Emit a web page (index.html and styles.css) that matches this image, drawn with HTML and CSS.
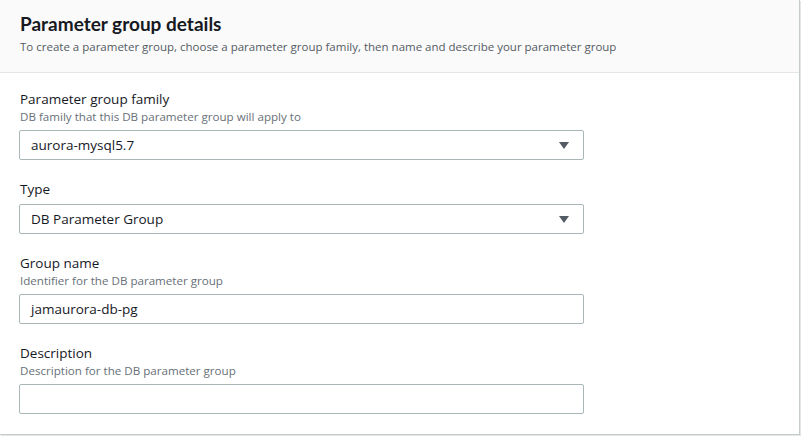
FILE: index.html
```html
<!DOCTYPE html>
<html>
<head>
<meta charset="utf-8">
<link rel="stylesheet" href="styles.css">
</head>
<body>
<div class="card">
  <div class="card-header">
    <h2 class="title">Parameter group details</h2>
    <p class="subtitle">To create a parameter group, choose a parameter group family, then name and describe your parameter group</p>
  </div>
  <div class="card-body">
    <div class="field">
      <div class="label">Parameter group family</div>
      <div class="hint">DB family that this DB parameter group will apply to</div>
      <div class="control select"><span>aurora-mysql5.7</span><span class="caret"></span></div>
    </div>
    <div class="field">
      <div class="label">Type</div>
      <div class="control select"><span>DB Parameter Group</span><span class="caret"></span></div>
    </div>
    <div class="field">
      <div class="label">Group name</div>
      <div class="hint">Identifier for the DB parameter group</div>
      <div class="control"><span>jamaurora-db-pg</span></div>
    </div>
    <div class="field">
      <div class="label">Description</div>
      <div class="hint">Description for the DB parameter group</div>
      <div class="control"></div>
    </div>
  </div>
</div>
</body>
</html>
```
FILE: styles.css
```css
* { box-sizing: border-box; }
html, body { margin: 0; padding: 0; background: #ffffff; }
body {
  font-family: "Open Sans", "Liberation Sans", sans-serif;
  color: #16191f;
  width: 801px;
  height: 436px;
  overflow: hidden;
}
.card {
  width: 800px;
  height: 435px;
  background: #fff;
  border-right: 1px solid #c6cccc;
  border-bottom: 1px solid #c6cccc;
  box-shadow: 1px 1px 0 0 #e3e6e6;
}
.card-header {
  background: #fafafa;
  border-bottom: 1px solid #e4e6e6;
  height: 73px;
  padding: 12px 20px 0 20px;
}
.title {
  margin: 0;
  font-family: "Lato", "Open Sans", sans-serif;
  font-size: 19px;
  line-height: 24px;
  font-weight: 700;
}
.subtitle {
  margin: 3px 0 0 0;
  font-size: 11.5px;
  line-height: 16px;
  color: #545b64;
}
.card-body {
  padding: 16px 19px 0 19px;
  display: flex;
  flex-direction: column;
  gap: 19px;
}
.field { display: flex; flex-direction: column; }
.label {
  font-size: 13.5px;
  line-height: 20px;
  padding-left: 1px;
}
.hint {
  font-size: 11.6px;
  line-height: 16px;
  color: #687078;
  padding-left: 1px;
}
.control {
  margin-top: 5px;
  width: 565px;
  height: 30px;
  border: 1px solid #aab7b8;
  border-radius: 2px;
  display: flex;
  align-items: center;
  justify-content: space-between;
  padding: 0 14px 0 11px;
  font-size: 13.5px;
}
.caret {
  width: 0;
  height: 0;
  border-left: 5px solid transparent;
  border-right: 5px solid transparent;
  border-top: 7px solid #545b64;
}
```
